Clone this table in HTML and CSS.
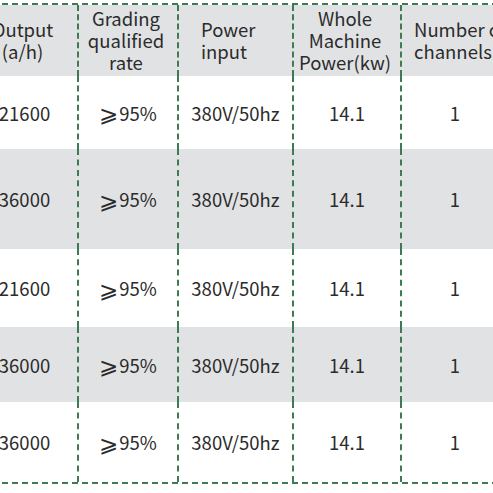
FILE: index.html
```html
<!DOCTYPE html>
<html lang="en">

<head>
    <meta charset="UTF-8">
    <meta name="viewport" content="width=device-width, initial-scale=1.0">
    <title>Grading Machine Specs</title>
    <link rel="stylesheet" href="styles.css">
</head>

<body>
    <div class="spec-table">
        <div class="cell head">Output<br>(a/h)</div>
        <div class="cell head line">Grading<br>qualified<br>rate</div>
        <div class="cell head line left">Power<br>input</div>
        <div class="cell head line">Whole<br>Machine<br>Power(kw)</div>
        <div class="cell head line left narrow">Number of<br>channels</div>

        <div class="cell">21600</div>
        <div class="cell line"><span class="ge">⩾</span>95%</div>
        <div class="cell line">380V/50hz</div>
        <div class="cell line">14.1</div>
        <div class="cell line">1</div>

        <div class="cell grey">36000</div>
        <div class="cell grey line"><span class="ge">⩾</span>95%</div>
        <div class="cell grey line">380V/50hz</div>
        <div class="cell grey line">14.1</div>
        <div class="cell grey line">1</div>

        <div class="cell">21600</div>
        <div class="cell line"><span class="ge">⩾</span>95%</div>
        <div class="cell line">380V/50hz</div>
        <div class="cell line">14.1</div>
        <div class="cell line">1</div>

        <div class="cell grey">36000</div>
        <div class="cell grey line"><span class="ge">⩾</span>95%</div>
        <div class="cell grey line">380V/50hz</div>
        <div class="cell grey line">14.1</div>
        <div class="cell grey line">1</div>

        <div class="cell">36000</div>
        <div class="cell line"><span class="ge">⩾</span>95%</div>
        <div class="cell line">380V/50hz</div>
        <div class="cell line">14.1</div>
        <div class="cell line">1</div>
    </div>
</body>

</html>
```

FILE: styles.css
```css
html,
body {
    margin: 0;
    overflow: hidden;
    background-color: #fff;
}

body {
    font-family: "Noto Sans CJK SC", "Noto Sans", sans-serif;
    font-size: 18.5px;
    color: #2b2b2b;
}

.spec-table {
    display: grid;
    grid-template-columns: 105px 100px 115px 108px 108px;
    grid-template-rows: 71px 73px 100px 78px 75px 80px;
    width: 536px;
    margin: 3px 0 0 -28px;
    border-top: 2px dashed #3f7b52;
    border-bottom: 2px dashed #3f7b52;
}

.cell {
    display: flex;
    align-items: center;
    justify-content: center;
    text-align: center;
    line-height: 22px;
    white-space: nowrap;
    box-sizing: border-box;
}

.head {
    padding: 0 4px 2px 0;
}

.cell.left {
    justify-content: flex-start;
    text-align: left;
    padding-left: 22px;
}

.cell.narrow {
    padding-left: 12px;
}

.line {
    border-left: 2px dashed #3f7b52;
}

.head,
.grey {
    background-color: #e1e2e4;
}

.ge {
    font-size: 23px;
    line-height: 1;
    vertical-align: 4px;
    margin-right: 1px;
}
```
